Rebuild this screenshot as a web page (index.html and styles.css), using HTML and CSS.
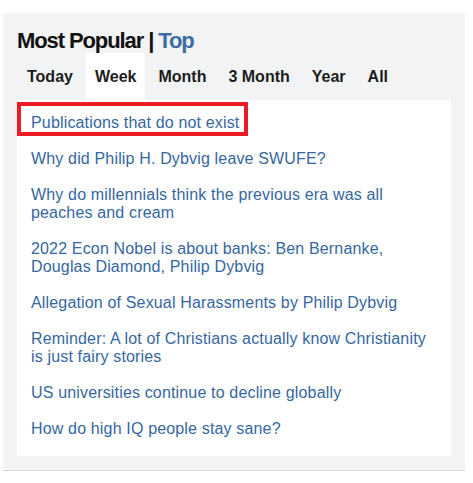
FILE: index.html
```html
<!DOCTYPE html>
<html>
<head>
<meta charset="utf-8">
<link rel="stylesheet" href="styles.css">
</head>
<body>
<div class="wrap">
  <section class="panel">
    <h2 class="title">Most Popular <span class="sep">|</span> <a class="top" href="#">Top</a></h2>
    <nav class="tabs">
      <a class="tab" href="#">Today</a>
      <a class="tab active" href="#">Week</a>
      <a class="tab" href="#">Month</a>
      <a class="tab" href="#">3 Month</a>
      <a class="tab" href="#">Year</a>
      <a class="tab" href="#">All</a>
    </nav>
    <ul class="list">
      <li class="item"><a href="#" class="link">Publications that do not exist</a><span class="highlight"></span></li>
      <li class="item"><a href="#" class="link">Why did Philip H. Dybvig leave SWUFE?</a></li>
      <li class="item"><a href="#" class="link">Why do millennials think the previous era was all peaches and cream</a></li>
      <li class="item"><a href="#" class="link">2022 Econ Nobel is about banks: Ben Bernanke, Douglas Diamond, Philip Dybvig</a></li>
      <li class="item"><a href="#" class="link">Allegation of Sexual Harassments by Philip Dybvig</a></li>
      <li class="item"><a href="#" class="link">Reminder: A lot of Christians actually know Christianity is just fairy stories</a></li>
      <li class="item"><a href="#" class="link">US universities continue to decline globally</a></li>
      <li class="item"><a href="#" class="link">How do high IQ people stay sane?</a></li>
    </ul>
  </section>
</div>
</body>
</html>
```

FILE: styles.css
```css
* { box-sizing: border-box; }
body {
  margin: 0;
  background: #fff;
  font-family: "Liberation Sans", Arial, sans-serif;
}
.wrap {
  margin: 13px 8px 0 3px;
  padding-bottom: 1px;
  border-bottom: 1px solid #cfcfcf;
}
.panel {
  background: #f2f3f5;
  padding: 15px 14px 13px 14px;
}
.title {
  margin: 0;
  font-size: 22px;
  line-height: 25px;
  font-weight: bold;
  letter-spacing: -1.1px;
  color: #111;
}
.sep { color: #111; }
.top {
  color: #3b6ca3;
  text-decoration: none;
}
.tabs {
  display: flex;
  gap: 4px;
  margin-left: 1px;
}
.tab {
  padding: 14px 9px;
  font-size: 16px;
  line-height: 19px;
  font-weight: bold;
  color: #1c1c1c;
  text-decoration: none;
}
.tab.active { background: #fff; }
.list {
  list-style: none;
  margin: 0;
  padding: 5px 14px 9px 14px;
  background: #fff;
}
.item {
  position: relative;
  padding: 9px 0;
  font-size: 16px;
  line-height: 18px;
  letter-spacing: 0.16px;
}
.link {
  color: #36679f;
  text-decoration: none;
}
.highlight {
  position: absolute;
  left: -14px;
  top: -3px;
  width: 231px;
  height: 34px;
  border: 4px solid #ec1c24;
}
```
